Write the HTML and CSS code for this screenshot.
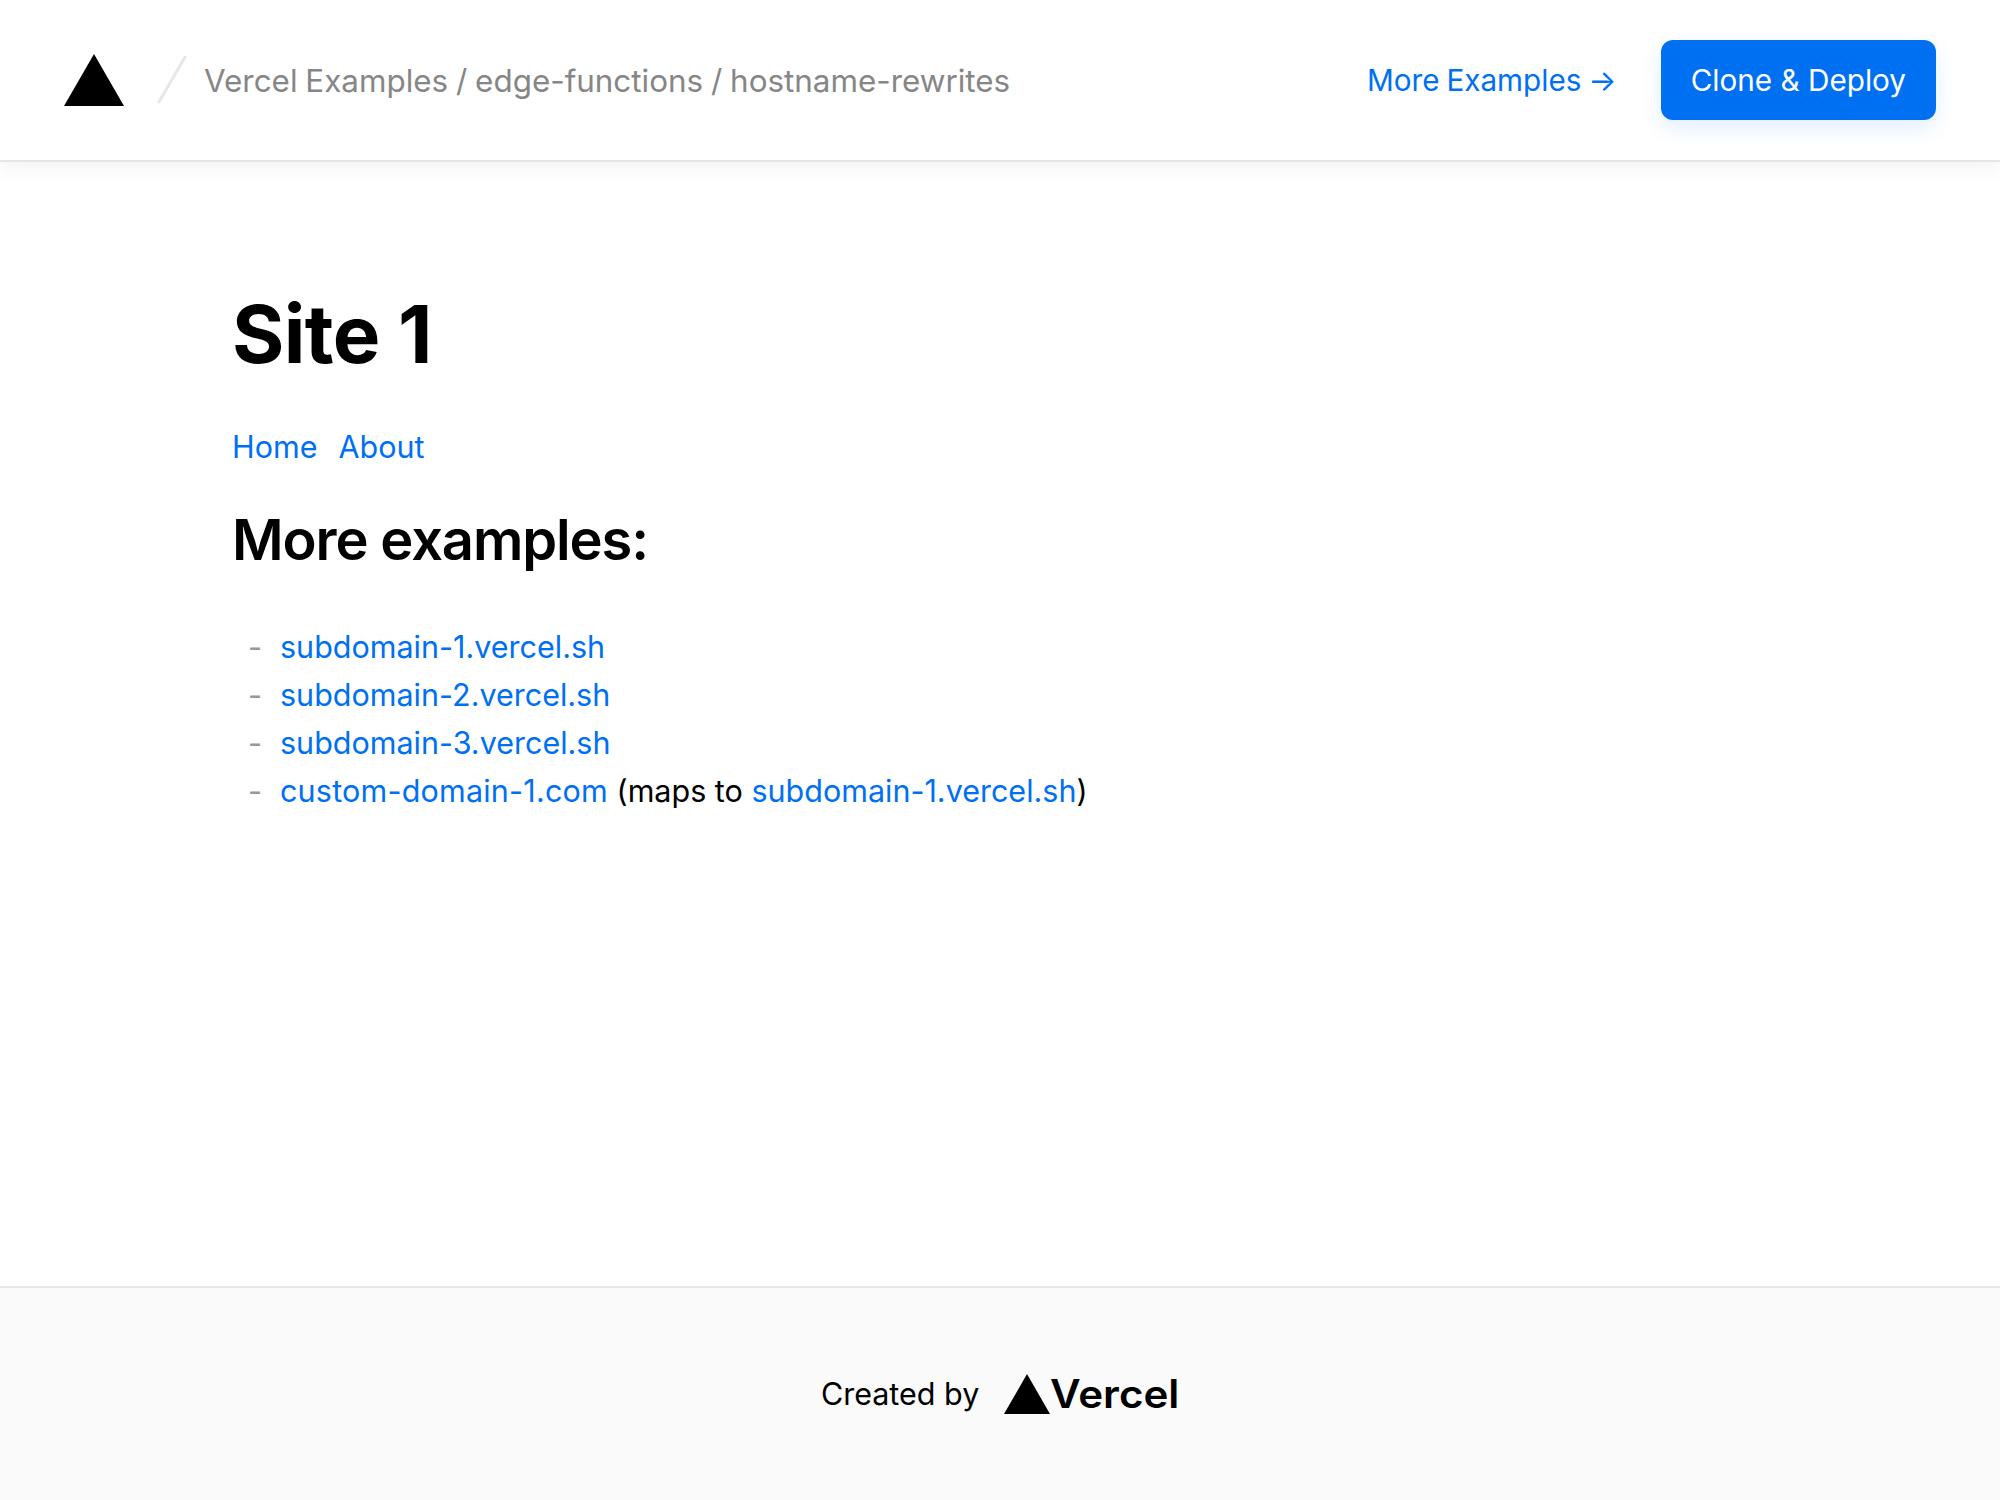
FILE: index.html
```html
<!DOCTYPE html>
<html lang="en">
<head>
  <meta charset="UTF-8">
  <title>hostname-rewrites - Vercel Examples</title>
  <link rel="stylesheet" href="styles.css">
</head>
<body>
  <nav class="nav">
    <div class="nav-left">
      <svg class="logo" viewBox="0 0 60 52" aria-label="Vercel"><path d="M30 0 60 52H0z"/></svg>
      <svg class="slash" viewBox="0 0 32 50" aria-hidden="true"><path d="M29 2 3 47"/></svg>
      <span class="crumbs">Vercel Examples / edge-functions / hostname-rewrites</span>
    </div>
    <div class="nav-right">
      <a class="more" href="#">More Examples →</a>
      <a class="deploy" href="#">Clone &amp; Deploy</a>
    </div>
  </nav>

  <main class="content">
    <h1>Site 1</h1>
    <div class="links">
      <a href="#">Home</a>
      <a href="#">About</a>
    </div>
    <h2>More examples:</h2>
    <ul class="examples">
      <li><a href="#">subdomain-1.vercel.sh</a></li>
      <li><a href="#">subdomain-2.vercel.sh</a></li>
      <li><a href="#">subdomain-3.vercel.sh</a></li>
      <li><a class="custom" href="#">custom-domain-1.com</a> (maps to <a href="#">subdomain-1.vercel.sh</a>)</li>
    </ul>
  </main>

  <footer class="footer">
    <span>Created by</span>
    <a class="brand" href="#">
      <svg class="brand-mark" viewBox="0 0 60 52" aria-hidden="true"><path d="M30 0 60 52H0z"/></svg>
      <span class="brand-name">Vercel</span>
    </a>
  </footer>
</body>
</html>
```

FILE: styles.css
```css
* {
  box-sizing: border-box;
}

body {
  margin: 0;
  min-height: 1500px;
  display: flex;
  flex-direction: column;
  font-family: Inter, sans-serif;
  font-size: 30.5px;
  line-height: 48px;
  color: #000;
  background: #fff;
}

a {
  color: #0070f3;
  text-decoration: none;
}

.nav {
  height: 162px;
  padding: 0 64px;
  display: flex;
  align-items: center;
  justify-content: space-between;
  border-bottom: 2px solid #e5e7eb;
  box-shadow: 0 6px 20px rgba(0, 0, 0, 0.05);
}

.nav-left {
  display: flex;
  align-items: center;
}

.logo {
  width: 60px;
  height: 52px;
  margin-right: 32px;
}

.slash {
  width: 32px;
  height: 50px;
  margin-right: 16px;
}

.slash path {
  fill: none;
  stroke: #e5e7eb;
  stroke-width: 3px;
  stroke-linecap: round;
}

.crumbs {
  padding-top: 2px;
  font-size: 31.4px;
  word-spacing: -1px;
  color: #868686;
}

.nav-right {
  display: flex;
  align-items: center;
  gap: 44px;
  font-size: 29.7px;
}

.more {
  word-spacing: -1.5px;
}

.deploy {
  padding: 16px 30px;
  color: #fff;
  background: #0070f3;
  border-radius: 12px;
  box-shadow: 0 8px 20px rgba(0, 118, 255, 0.12);
}

.content {
  flex: 1;
  padding: 124px 232px 0;
}

h1 {
  margin: 0 0 41px;
  font-size: 80px;
  line-height: 96px;
  font-weight: 700;
  letter-spacing: -0.008em;
}

.links {
  display: flex;
  gap: 21px;
  margin-bottom: 37px;
}

h2 {
  margin: 0 0 51px;
  font-size: 56px;
  line-height: 64px;
  font-weight: 600;
  letter-spacing: -0.02em;
}

.examples {
  margin: 0;
  padding: 0;
  list-style: none;
}

.examples li {
  display: flex;
  white-space: pre;
}

.examples li::before {
  content: "-";
  width: 32px;
  padding-left: 16px;
  color: #999;
}

.custom {
  letter-spacing: 0.2px;
}

.footer {
  height: 214px;
  display: flex;
  align-items: center;
  justify-content: center;
  gap: 25px;
  background: #fafafa;
  border-top: 2px solid #e5e7eb;
}

.brand {
  display: flex;
  align-items: center;
  color: #000;
}

.brand-mark {
  width: 46px;
  height: 40px;
}

.brand-name {
  margin-right: 9px;
  font-size: 39px;
  font-weight: 600;
  transform: scaleX(1.08);
  transform-origin: left center;
}
```
